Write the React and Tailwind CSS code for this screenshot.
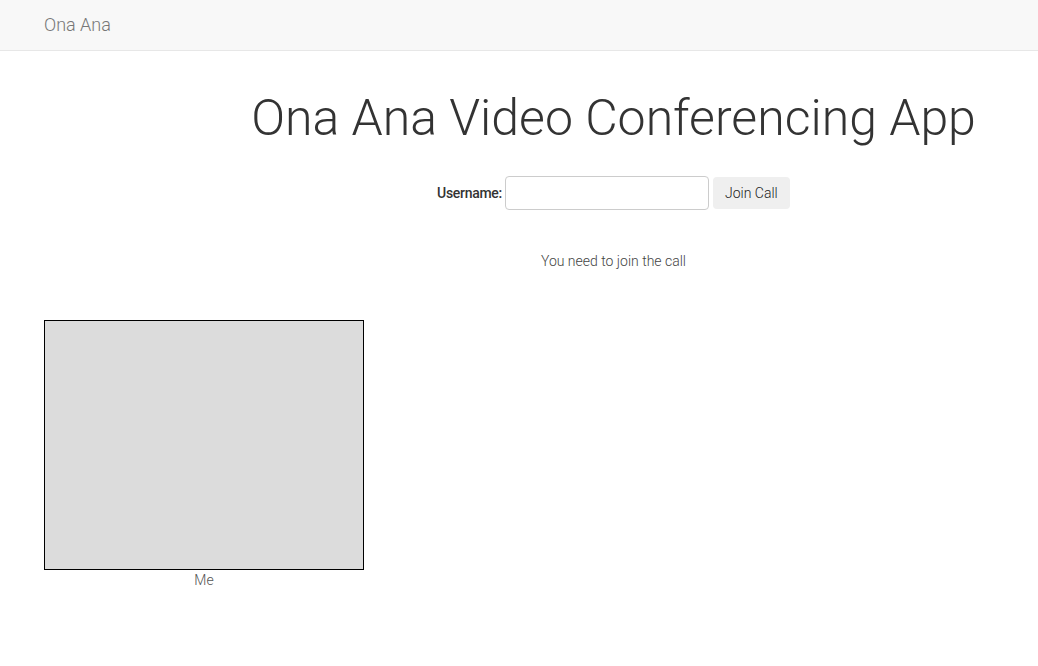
export default function App() {
  return (
    <div className="min-h-[666px] bg-white text-[#333] text-[14px] leading-[20px]" style={{ fontFamily: "Roboto, 'Liberation Sans', sans-serif" }}>
      <nav className="h-[51px] bg-[#f8f8f8] border-b border-[#e7e7e7] flex items-center pl-[44px]">
        <span className="text-[18px] font-light text-[#777] leading-[20px]">Ona Ana</span>
      </nav>
      <div className="pl-[189px] text-center">
        <h1 className="mt-[38px] text-[50px] leading-[58px] font-light text-[#333]">Ona Ana Video Conferencing App</h1>
        <div className="mt-[29px] flex justify-center items-center">
          <label className="font-medium text-[14px] tracking-[-0.3px] mr-[3px]">Username:</label>
          <input type="text" className="w-[204px] h-[34px] border border-[#ccc] rounded-[4px] px-3 outline-none" />
          <button className="ml-[4px] w-[77px] h-[32px] bg-[#efefef] rounded-[4px] font-light text-[#222] text-[14px]">Join Call</button>
        </div>
        <p className="mt-[41px] font-light text-[#444]">You need to join the call</p>
      </div>
      <div className="ml-[44px] mt-[49px] w-[320px]">
        <div className="w-[320px] h-[250px] bg-[#dcdcdc] border border-black"></div>
        <div className="text-center font-light text-[#555] leading-[20px]">Me</div>
      </div>
    </div>
  );
}
